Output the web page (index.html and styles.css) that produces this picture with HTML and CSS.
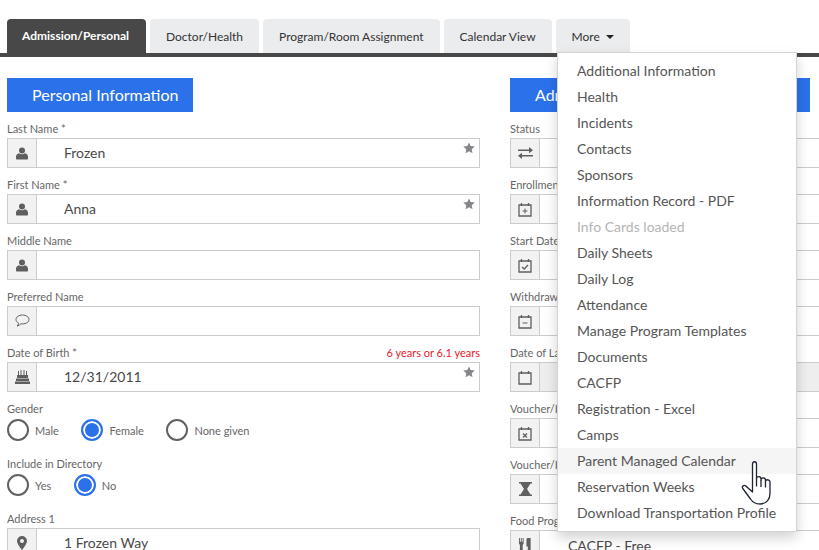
FILE: index.html
```html
<!DOCTYPE html>
<html lang="en">
<head>
<meta charset="utf-8">
<title>Child Record</title>
<link rel="stylesheet" href="styles.css">
</head>
<body>
<svg class="defs" width="0" height="0" aria-hidden="true">
  <defs>
    <symbol id="user" viewBox="0 0 12 13"><circle cx="6" cy="3.400" r="3"/><path d="M1 12.400c-.6 0-1-.4-1-1V9.600C0 7.800 1.300 6.700 3 6.200c.8.7 1.800 1 3 1s2.200-.3 3-1c1.700.5 3 1.600 3 3.400v1.800c0 .6-.4 1-1 1z"/></symbol>
    <symbol id="star" viewBox="0 0 12 12"><path d="M6 .4l1.700 3.700 4 .5-3 2.700.8 4L6 9.300 2.500 11.300l.8-4-3-2.700 4-.5z"/></symbol>
  </defs>
</svg>
<div class="tabs">
  <div class="tab active">Admission/Personal</div>
  <div class="tab">Doctor/Health</div>
  <div class="tab">Program/Room Assignment</div>
  <div class="tab">Calendar View</div>
  <div class="tab more">More <span class="caret"></span></div>
</div>
<main class="columns">
  <section class="col">
    <h2 class="head head-left">Personal Information</h2>
    <div class="field">
      <div class="label">Last Name *</div>
      <div class="box"><span class="addon"><svg class="ic ic-user"><use href="#user"/></svg></span><span class="value">Frozen</span><svg class="star"><use href="#star"/></svg></div>
    </div>
    <div class="field">
      <div class="label">First Name *</div>
      <div class="box"><span class="addon"><svg class="ic ic-user"><use href="#user"/></svg></span><span class="value">Anna</span><svg class="star"><use href="#star"/></svg></div>
    </div>
    <div class="field">
      <div class="label">Middle Name</div>
      <div class="box"><span class="addon"><svg class="ic ic-user"><use href="#user"/></svg></span><span class="value"></span></div>
    </div>
    <div class="field">
      <div class="label">Preferred Name</div>
      <div class="box"><span class="addon"><svg class="ic ic-16" viewBox="0 0 15 14"><path fill="none" stroke="currentColor" d="M7.500 1C3.800 1 1 3 1 5.500c0 1.500 1 2.800 2.600 3.600-.2 1-.7 2-1.400 2.900 1.500-.4 2.800-1.200 3.700-2.200.5.100 1 .1 1.600.1 3.700 0 6.500-2 6.500-4.400S11.200 1 7.500 1z"/></svg></span><span class="value"></span></div>
    </div>
    <div class="field">
      <div class="label label-row"><span>Date of Birth *</span><span class="age">6 years or 6.1 years</span></div>
      <div class="box"><span class="addon"><svg class="ic ic-16" viewBox="0 0 15 14"><path d="M3 1h1v4H3zM5.500 0h1v5h-1zM8.500 0h1v5h-1zM11 1h1v4h-1zM2 5h11v3H2zM1 8.500h13V11H1zM0 11.500h15V14H0z"/></svg></span><span class="value">12/31/2011</span><svg class="star"><use href="#star"/></svg></div>
    </div>
    <div class="radio-field">
      <div class="label">Gender</div>
      <div class="radios">
        <span class="radio"><i class="dot"></i>Male</span>
        <span class="radio"><i class="dot on"></i>Female</span>
        <span class="radio"><i class="dot"></i>None given</span>
      </div>
    </div>
    <div class="radio-field">
      <div class="label">Include in Directory</div>
      <div class="radios">
        <span class="radio"><i class="dot"></i>Yes</span>
        <span class="radio"><i class="dot on"></i>No</span>
      </div>
    </div>
    <div class="field">
      <div class="label">Address 1</div>
      <div class="box"><span class="addon"><svg class="ic ic-pin" viewBox="0 0 10 14"><path fill-rule="evenodd" d="M5 0a5 5 0 0 1 5 5c0 2.500-3 6.500-5 9-2-2.500-5-6.500-5-9a5 5 0 0 1 5-5zm0 3a2 2 0 1 0 0 4 2 2 0 0 0 0-4z"/></svg></span><span class="value">1 Frozen Way</span></div>
    </div>
  </section>
  <section class="col">
    <h2 class="head">Admission Information</h2>
    <div class="field">
      <div class="label">Status</div>
      <div class="box"><span class="addon"><svg class="ic ic-16" viewBox="0 0 15 12"><path d="M0 2.500h11V0l4 3.300-4 3v-2.400H0zM15 8.100H4V5.700L0 8.800 4 12V9.500h11z"/></svg></span><span class="value"></span></div>
    </div>
    <div class="field">
      <div class="label">Enrollment Date</div>
      <div class="box"><span class="addon"><svg class="ic ic-cal" viewBox="0 0 14 15"><path class="cal" d="M1 3h12v11H1z"/><path class="cal" d="M3.500 1v3M10.500 1v3"/><path d="M6.500 6.500h1v2h2v1h-2v2h-1v-2h-2v-1h2z"/></svg></span><span class="value"></span></div>
    </div>
    <div class="field">
      <div class="label">Start Date</div>
      <div class="box"><span class="addon"><svg class="ic ic-cal" viewBox="0 0 14 15"><path class="cal" d="M1 3h12v11H1z"/><path class="cal" d="M3.500 1v3M10.500 1v3"/><path class="cal" d="M4 9l2.200 2L10 7"/></svg></span><span class="value"></span></div>
    </div>
    <div class="field">
      <div class="label">Withdraw Date</div>
      <div class="box"><span class="addon"><svg class="ic ic-cal" viewBox="0 0 14 15"><path class="cal" d="M1 3h12v11H1z"/><path class="cal" d="M3.500 1v3M10.500 1v3"/><path d="M4.500 8.500h5v1h-5z"/></svg></span><span class="value"></span></div>
    </div>
    <div class="field">
      <div class="label">Date of Last Day</div>
      <div class="box"><span class="addon"><svg class="ic ic-cal" viewBox="0 0 14 15"><path class="cal" d="M1 3h12v11H1z"/><path class="cal" d="M3.500 1v3M10.500 1v3"/></svg></span><span class="value value-off"></span></div>
    </div>
    <div class="field">
      <div class="label">Voucher/Invoice Start</div>
      <div class="box"><span class="addon"><svg class="ic ic-cal" viewBox="0 0 14 15"><path class="cal" d="M1 3h12v11H1z"/><path class="cal" d="M3.500 1v3M10.500 1v3"/><path class="cal" d="M5 7.500l4 4M9 7.500l-4 4"/></svg></span><span class="value"></span></div>
    </div>
    <div class="field">
      <div class="label">Voucher/Invoice End</div>
      <div class="box"><span class="addon"><svg class="ic ic-16" viewBox="0 0 13 14"><path d="M0 0h13v1.500h-1.500L8 7l3.500 5.500H13V14H0v-1.500h1.500L5 7 1.500 1.500H0z"/></svg></span><span class="value"></span></div>
    </div>
    <div class="field">
      <div class="label">Food Program</div>
      <div class="box"><span class="addon"><svg class="ic ic-16" viewBox="0 0 14 15"><path d="M0 0h1v4h1V0h1v4h1V0h1v6L4 7.500V15H1V7.500L0 6zM9 0h3.500v15h-3V9H8V3c0-1.500.4-3 1-3z"/></svg></span><span class="value value-food">CACFP - Free</span></div>
    </div>
  </section>
</main>
<ul class="menu">
  <li>Additional Information</li>
  <li>Health</li>
  <li>Incidents</li>
  <li>Contacts</li>
  <li>Sponsors</li>
  <li>Information Record - PDF</li>
  <li class="muted">Info Cards loaded</li>
  <li>Daily Sheets</li>
  <li>Daily Log</li>
  <li>Attendance</li>
  <li>Manage Program Templates</li>
  <li>Documents</li>
  <li>CACFP</li>
  <li>Registration - Excel</li>
  <li>Camps</li>
  <li class="hover">Parent Managed Calendar</li>
  <li>Reservation Weeks</li>
  <li>Download Transportation Profile</li>
</ul>
<svg class="hand" viewBox="0 0 36 50" aria-hidden="true">
  <path fill="#fff" stroke="#1f2433" stroke-width="1.300" stroke-linejoin="round" d="M11.500 4c0-3 4-3 4 0v14.500c0-2.500 4.500-2.800 4.500.5v1c0-2.800 4.500-2.800 4.500.3v1.200c.3-2.500 4.500-2.300 4.500.7v11c0 5.500-3 10.800-10 10.800-5 0-7.500-2-9.500-5L1.800 28.500c-1.300-2 .9-4 2.700-2.700l7 6.200z"/>
  <path fill="none" stroke="#1f2433" stroke-width="1.300" d="M15.500 18.500v8M20 20v7M24.500 21.500v6"/>
</svg>
</body>
</html>
```

FILE: styles.css
```css
* { box-sizing: border-box; }
html, body { margin: 0; height: 550px; overflow: hidden; }
body {
  position: relative;
  width: 819px;
  padding: 19px 0 0 7px;
  background: #fff;
  color: #4a4a4a;
  font-family: Lato, "Open Sans", sans-serif;
  font-size: 12px;
}
.defs { position: absolute; }
.tabs {
  display: flex;
  gap: 4px;
  height: 38px;
  margin-left: -7px;
  padding-left: 7px;
  border-bottom: 4px solid #484848;
}
.tab {
  height: 34px;
  padding: 0 16px;
  border-radius: 4px 4px 0 0;
  background: #ebecee;
  color: #333;
  font-size: 12px;
  line-height: 35px;
  white-space: nowrap;
}
.tab.active {
  height: 38px;
  padding: 0 17px 0 15px;
  background: #484848;
  color: #fff;
  font-weight: 700;
  line-height: 33px;
}
.caret {
  display: inline-block;
  margin-left: 3px;
  vertical-align: 2px;
  border-top: 4px solid #222;
  border-left: 4px solid transparent;
  border-right: 4px solid transparent;
}
.columns {
  display: grid;
  grid-template-columns: 473px 400px;
  gap: 30px;
  padding-top: 21px;
}
.head {
  width: 186px;
  height: 34px;
  margin: 0 0 8px;
  padding-left: 25px;
  background: #2b71ea;
  color: #fff;
  font-size: 16px;
  font-weight: 400;
  line-height: 33px;
  white-space: nowrap;
}
.col + .col .head { width: 300px; }
.field { height: 56px; }
.label {
  height: 18px;
  color: #666;
  font-size: 11px;
  line-height: 18px;
}
.label-row { display: flex; justify-content: space-between; }
.age { color: #e8202a; font-size: 11px; }
.box {
  position: relative;
  display: flex;
  height: 30px;
  border: 1px solid #ccc;
}
.addon {
  display: flex;
  flex: none;
  align-items: center;
  justify-content: center;
  width: 29px;
  border-right: 1px solid #ccc;
  background: #f2f2f2;
  color: #5f5f5f;
}
.value {
  flex: 1;
  padding-left: 27px;
  color: #4a4a4a;
  font-size: 14px;
  line-height: 27px;
  white-space: nowrap;
}
.value-off { background: #eee; }
.value-food { padding-left: 28px; line-height: 30px; }
.ic { fill: currentColor; }
.ic-user { width: 12px; height: 13px; }
.ic-16 { width: 15px; height: 14px; }
.ic-cal { width: 14px; height: 15px; color: #5f5f5f; }
.cal { fill: none; stroke: currentColor; stroke-width: 1.300; }
.ic-pin { width: 10px; height: 14px; }
.star {
  position: absolute;
  top: 3px;
  right: 4px;
  width: 12px;
  height: 12px;
  fill: #85858a;
}
.radio-field { height: 55px; }
.radios { display: flex; gap: 22.500px; height: 24px; }
.radio {
  display: flex;
  align-items: center;
  gap: 6px;
  color: #666;
  font-size: 11px;
}
.dot {
  width: 22px;
  height: 22px;
  border: 2px solid #616161;
  border-radius: 50%;
}
.dot.on {
  border-color: #2b71ea;
  background: #2b71ea;
  box-shadow: inset 0 0 0 2px #fff;
}
.menu {
  position: absolute;
  top: 52px;
  left: 557px;
  width: 240px;
  margin: 0;
  padding: 5px 0;
  border: 1px solid #d4d4d4;
  background: #fff;
  box-shadow: 0 6px 12px rgba(0, 0, 0, .175);
  color: #555;
  font-size: 14px;
  list-style: none;
}
.menu li {
  height: 26px;
  padding-left: 19px;
  line-height: 26px;
  white-space: nowrap;
}
.menu .muted { color: #b5b5b5; }
.menu .hover { background: #f5f5f5; }
.hand {
  position: absolute;
  top: 460px;
  left: 741px;
  width: 36px;
  height: 50px;
}
```
